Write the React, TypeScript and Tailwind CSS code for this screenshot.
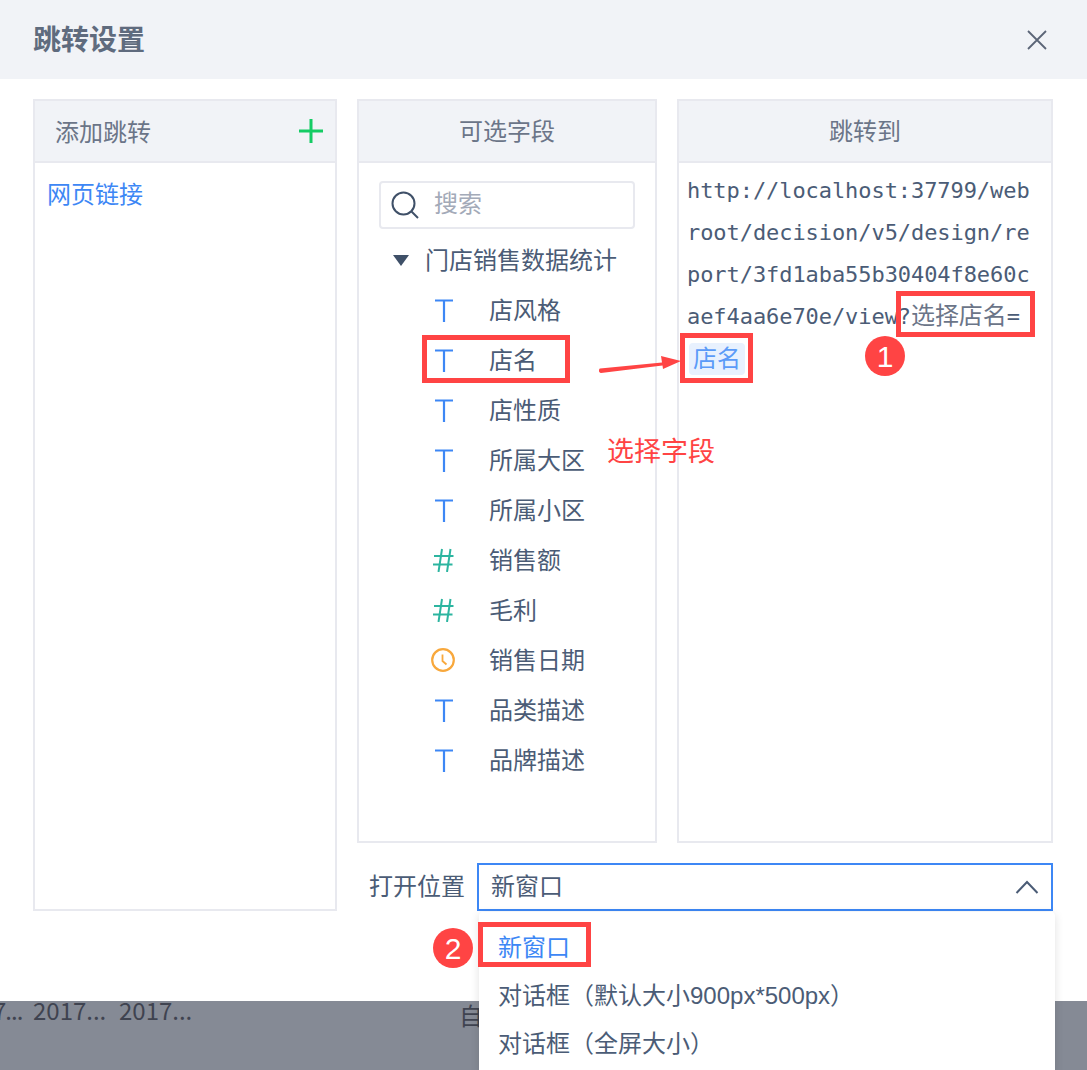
const CJK = "font-['Noto_Sans_CJK_SC','Noto_Sans',sans-serif]";

function TIcon() {
  return (
    <svg width="24" height="24" viewBox="0 0 24 24" fill="none" stroke="#3d87f5" strokeWidth="2.2">
      <path d="M4 2.5H22M13 2.5V24" />
    </svg>
  );
}
function HashIcon() {
  return (
    <svg width="24" height="24" viewBox="0 0 24 24" fill="none" stroke="#2cb5a0" strokeWidth="2">
      <path d="M11 1L7.5 24M19.5 1L16 24M3 8H22.5M2 16.5H21.5" />
    </svg>
  );
}
function ClockIcon() {
  return (
    <svg width="24" height="24" viewBox="0 0 24 24" fill="none" stroke="#f8a83c" strokeWidth="2.2">
      <circle cx="12" cy="12" r="10.8" />
      <path d="M11.5 6.5V13L15.5 16.5" strokeWidth="1.8" />
    </svg>
  );
}

const fields: [string, "t" | "h" | "c"][] = [
  ["店风格", "t"],
  ["店名", "t"],
  ["店性质", "t"],
  ["所属大区", "t"],
  ["所属小区", "t"],
  ["销售额", "h"],
  ["毛利", "h"],
  ["销售日期", "c"],
  ["品类描述", "t"],
  ["品牌描述", "t"],
];

function PanelHead({ children, center }: { children: React.ReactNode; center?: boolean }) {
  return (
    <div
      className={`h-[62px] shrink-0 flex items-center bg-[#f1f3f7] border-b-2 border-[#e8e9ef] text-[24px] text-[#6b7588] ${
        center ? "justify-center" : "pl-5 pr-3 justify-between"
      }`}
    >
      {children}
    </div>
  );
}

function RedBox({ className }: { className: string }) {
  return <div className={`absolute border-[5px] border-[#ff4444] ${className}`} />;
}

function Badge({ n, className }: { n: string; className: string }) {
  return (
    <div
      className={`absolute w-10 h-10 rounded-full bg-[#ff4444] text-white text-[30px] flex items-center justify-center font-['Liberation_Sans',sans-serif] ${className}`}
    >
      {n}
    </div>
  );
}

export default function App() {
  return (
    <div className={`relative w-[1087px] h-[1070px] overflow-hidden bg-white ${CJK} text-[#4b5c76]`}>
      <header className="h-[79px] bg-[#f1f3f7] flex items-center justify-between pl-[33px] pr-[39px]">
        <h1 className="text-[28px] font-bold text-[#5f6b7e] pb-[4px]">跳转设置</h1>
        <svg width="22" height="22" viewBox="0 0 22 22" fill="none" stroke="#5b6577" strokeWidth="1.8">
          <path d="M2 2L20 20M20 2L2 20" />
        </svg>
      </header>

      <main className="h-[922px] flex gap-5 pl-[33px] pt-5">
        <section className="w-[304px] h-[812px] border-2 border-[#e8e9ef] flex flex-col">
          <PanelHead>
            <span>添加跳转</span>
            <svg width="24" height="24" viewBox="0 0 24 24" fill="none" stroke="#14cc64" strokeWidth="3">
              <path d="M12 0V24M0 12H24" />
            </svg>
          </PanelHead>
          <div className="pl-3 pt-3 text-[24px] leading-[36px] text-[#3d87f5]">网页链接</div>
        </section>

        <div className="w-[696px] flex flex-col">
          <div className="flex gap-5 h-[744px]">
            <section className="w-[300px] border-2 border-[#e8e9ef] flex flex-col">
              <PanelHead center><span className="pb-[3px]">可选字段</span></PanelHead>
              <div className="pl-5 pt-[18px]">
                <div className="w-[256px] h-12 border-2 border-[#e8e9ef] rounded flex items-center pl-[10px] gap-[15px]">
                  <svg width="28" height="28" viewBox="0 0 28 28" fill="none" stroke="#3f5068" strokeWidth="2">
                    <circle cx="12.5" cy="12.5" r="11" />
                    <path d="M20.5 20.5L27 27" />
                  </svg>
                  <span className="text-[24px] text-[#a3aab8] pb-[6px]">搜索</span>
                </div>
                <div className="h-[56px] flex items-center pl-[14px] gap-4 pt-[6px]">
                  <svg width="16" height="11" viewBox="0 0 16 11" fill="#3f5068">
                    <path d="M0 0H16L8 11Z" />
                  </svg>
                  <span className="text-[24px] pb-[2px]">门店销售数据统计</span>
                </div>
                {fields.map(([name, kind]) => (
                  <div key={name} className="h-[50px] flex items-center pl-[52px] gap-[34px] text-[24px]">
                    {kind === "t" ? <TIcon /> : kind === "h" ? <HashIcon /> : <ClockIcon />}
                    <span className="pb-[2px]">{name}</span>
                  </div>
                ))}
              </div>
            </section>

            <section className="w-[376px] border-2 border-[#e8e9ef] flex flex-col">
              <PanelHead center><span className="pb-[3px]">跳转到</span></PanelHead>
              <div className="pl-[8px] pt-[7px] text-[22px] leading-[42px] tracking-[-0.07px] font-['DejaVu_Sans_Mono','Noto_Sans_CJK_SC',monospace] text-[#4b5c76] w-[360px]">
                <div>http://localhost:37799/web</div>
                <div>root/decision/v5/design/re</div>
                <div>port/3fd1aba55b30404f8e60c</div>
                <div className="whitespace-nowrap">
                  aef4aa6e70e/view?
                  <span className={`${CJK} text-[24px] leading-none text-[#6b7588]`}>选择店名</span>=
                </div>
                <div className="flex items-center h-[42px]">
                  <span className={`${CJK} ml-[2px] text-[24px] h-8 w-14 rounded bg-[#e8f1fe] text-[#5b9bf8] flex items-center justify-center`}>
                    <span className="pb-[4px] leading-none">店名</span>
                  </span>
                </div>
              </div>
            </section>
          </div>

          <div className="relative mt-5 h-12 flex items-center text-[24px]">
            <span className="ml-3 w-[108px] pb-[4px]">打开位置</span>
            <div className="flex-1 h-12 border-2 border-[#3d87f5] flex items-center justify-between pl-3 pr-3">
              <span className="pb-[4px]">新窗口</span>
              <svg width="24" height="14" viewBox="0 0 24 14" fill="none" stroke="#4b5c76" strokeWidth="2">
                <path d="M1.5 13L12 2L22.5 13" />
              </svg>
            </div>
            <div className="absolute left-[122px] top-[49px] w-[576px] h-[160px] bg-white rounded-t shadow-[0_2px_10px_rgba(0,0,0,0.12)] pl-[19px] text-[24px] font-['Liberation_Sans','Noto_Sans_CJK_SC',sans-serif]">
              <div className="h-12 mt-[12px] flex items-center text-[#3d87f5]"><span>新窗口</span></div>
              <div className="h-12 flex items-center"><span>对话框（默认大小900px*500px）</span></div>
              <div className="h-12 flex items-center"><span>对话框（全屏大小）</span></div>
            </div>
          </div>
        </div>
      </main>

      <footer className="h-[69px] bg-[#858a95] flex items-start text-[24px] leading-[24px] text-[#3f4350]">
        <span className="w-[33px] shrink-0 -mt-[3px]"><span className="block -ml-[7px] tracking-[-1px]">7...</span></span>
        <span className="w-[86px] shrink-0 -mt-[3px]">2017...</span>
        <span className="w-[340px] shrink-0 -mt-[3px]">2017...</span>
        <span className="mt-[2px]">自</span>
      </footer>

      <RedBox className="left-[422px] top-[335px] w-[148px] h-[48px]" />
      <RedBox className="left-[896px] top-[291px] w-[139px] h-[46px]" />
      <RedBox className="left-[680px] top-[333px] w-[73px] h-[50px]" />
      <RedBox className="left-[478px] top-[922px] w-[113px] h-[45px]" />
      <Badge n="1" className="left-[865px] top-[336px]" />
      <Badge n="2" className="left-[433px] top-[928px]" />

      <svg className="absolute left-[596px] top-[350px]" width="90" height="26" viewBox="0 0 90 26" fill="#ff4444">
        <path d="M4 18.5L66 12.5L65 6L85 11L67 19L66.5 15.5L5 23C2.5 23 2.5 19 4 18.5Z" />
      </svg>
      <span className="absolute left-[607px] top-[432px] text-[27px] leading-[36px] text-[#ff4444]">选择字段</span>
    </div>
  );
}
